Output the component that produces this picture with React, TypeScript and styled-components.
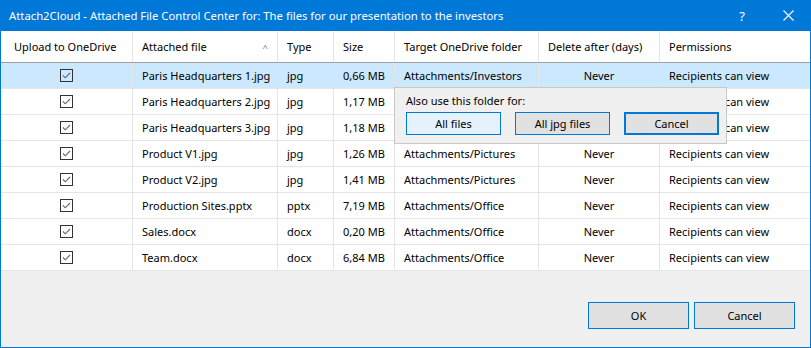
import styled, { createGlobalStyle } from 'styled-components';

const GlobalStyle = createGlobalStyle`
  html, body {
    margin: 0;
    padding: 0;
    background: #ffffff;
  }
  * {
    box-sizing: border-box;
  }
`;

interface FileRow {
  name: string;
  type: string;
  size: string;
  folder: string;
}

const files: FileRow[] = [
  { name: 'Paris Headquarters 1.jpg', type: 'jpg', size: '0,66 MB', folder: 'Attachments/Investors' },
  { name: 'Paris Headquarters 2.jpg', type: 'jpg', size: '1,17 MB', folder: 'Attachments/Investors' },
  { name: 'Paris Headquarters 3.jpg', type: 'jpg', size: '1,18 MB', folder: 'Attachments/Investors' },
  { name: 'Product V1.jpg', type: 'jpg', size: '1,26 MB', folder: 'Attachments/Pictures' },
  { name: 'Product V2.jpg', type: 'jpg', size: '1,41 MB', folder: 'Attachments/Pictures' },
  { name: 'Production Sites.pptx', type: 'pptx', size: '7,19 MB', folder: 'Attachments/Office' },
  { name: 'Sales.docx', type: 'docx', size: '0,20 MB', folder: 'Attachments/Office' },
  { name: 'Team.docx', type: 'docx', size: '6,84 MB', folder: 'Attachments/Office' },
];

const columns = '132px 145px 56px 61px 144px 121px 1fr';

function CheckIcon() {
  return (
    <svg width="13" height="13" viewBox="0 0 13 13">
      <rect x="0.5" y="0.5" width="12" height="12" fill="none" stroke="#333333" />
      <path d="M3 6.5 L5.3 8.8 L10 4" fill="none" stroke="#666666" strokeWidth="1.1" />
    </svg>
  );
}

export default function App() {
  return (
    <>
      <GlobalStyle />
      <Window>
        <TitleBar>
          <TitleText>
            Attach2Cloud - Attached File Control Center for: The files for our presentation to the investors
          </TitleText>
          <TitleButton>?</TitleButton>
          <TitleButton>
            <svg width="11" height="11" viewBox="0 0 11 11">
              <path d="M0.5 0.5 L10.5 10.5 M10.5 0.5 L0.5 10.5" stroke="#ffffff" strokeWidth="1.1" />
            </svg>
          </TitleButton>
        </TitleBar>
        <Body>
          <Table>
            <HeaderRow>
              <HeaderCell $first>Upload to OneDrive</HeaderCell>
              <HeaderCell>
                Attached file
                <SortArrow>^</SortArrow>
              </HeaderCell>
              <HeaderCell>Type</HeaderCell>
              <HeaderCell>Size</HeaderCell>
              <HeaderCell>Target OneDrive folder</HeaderCell>
              <HeaderCell>Delete after (days)</HeaderCell>
              <HeaderCell $last>Permissions</HeaderCell>
            </HeaderRow>
            {files.map((f, i) => (
              <Row key={f.name} $selected={i === 0}>
                <Cell $center>
                  <CheckIcon />
                </Cell>
                <Cell>{f.name}</Cell>
                <Cell>{f.type}</Cell>
                <Cell>{f.size}</Cell>
                <Cell>{f.folder}</Cell>
                <Cell $center>Never</Cell>
                <Cell $last>Recipients can view</Cell>
              </Row>
            ))}
            <Popup>
              <PopupLabel>Also use this folder for:</PopupLabel>
              <PopupButtons>
                <Button $variant="hover">All files</Button>
                <Button>All jpg files</Button>
                <Button $variant="focus">Cancel</Button>
              </PopupButtons>
            </Popup>
          </Table>
          <Footer>
            <Button $wide>OK</Button>
            <Button $wide>Cancel</Button>
          </Footer>
        </Body>
      </Window>
    </>
  );
}

const Window = styled.div`
  width: 811px;
  height: 348px;
  display: flex;
  flex-direction: column;
  border: 1px solid #0078d7;
  border-top: none;
  background: #f0f0f0;
  font-family: 'Noto Sans', 'Open Sans', sans-serif;
  font-size: 11px;
  color: #000000;
`;

const TitleBar = styled.div`
  height: 31px;
  margin: 0 -1px;
  background: #0078d7;
  color: #ffffff;
  display: flex;
  align-items: center;
  padding-left: 9px;
`;

const TitleText = styled.div`
  flex: 1;
  font-size: 11.3px;
  white-space: nowrap;
`;

const TitleButton = styled.div`
  width: 46px;
  height: 31px;
  display: flex;
  align-items: center;
  justify-content: center;
  font-size: 13px;
`;

const Body = styled.div`
  flex: 1;
  display: flex;
  flex-direction: column;
`;

const Table = styled.div`
  position: relative;
  background: #ffffff;
`;

const HeaderRow = styled.div`
  display: grid;
  grid-template-columns: ${columns};
  height: 32px;
  border-bottom: 1px solid #a0a0a0;
`;

const HeaderCell = styled.div<{ $first?: boolean; $last?: boolean }>`
  position: relative;
  display: flex;
  align-items: center;
  padding-left: ${(p) => (p.$first ? '13px' : '9px')};
  border-right: ${(p) => (p.$last ? 'none' : '1px solid #e5e5e5')};
  white-space: nowrap;
`;

const SortArrow = styled.span`
  position: absolute;
  right: 9px;
  top: 11px;
  font-size: 8px;
  color: #6d7c94;
  transform: scaleX(1.2);
`;

const Row = styled.div<{ $selected?: boolean }>`
  display: grid;
  grid-template-columns: ${columns};
  height: 26px;
  background: ${(p) => (p.$selected ? '#cce8ff' : '#ffffff')};
  border-bottom: 1px solid #e5e5e5;
`;

const Cell = styled.div<{ $center?: boolean; $last?: boolean }>`
  display: flex;
  align-items: center;
  justify-content: ${(p) => (p.$center ? 'center' : 'flex-start')};
  padding-left: ${(p) => (p.$center ? '0' : '9px')};
  border-right: ${(p) => (p.$last ? 'none' : '1px solid #e5e5e5')};
  white-space: nowrap;
`;

const Popup = styled.div`
  position: absolute;
  left: 393px;
  top: 56px;
  width: 333px;
  height: 57px;
  background: #f0f0f0;
  border: 1px solid #c8c8c8;
  padding: 5px 0 0 11px;
  display: flex;
  flex-direction: column;
  gap: 3px;
`;

const PopupLabel = styled.div`
  height: 16px;
  line-height: 16px;
`;

const PopupButtons = styled.div`
  display: flex;
  gap: 14px;
`;

const Button = styled.div<{ $variant?: 'hover' | 'focus'; $wide?: boolean }>`
  width: ${(p) => (p.$wide ? '101px' : '95px')};
  height: ${(p) => (p.$wide ? '27px' : '23px')};
  display: flex;
  align-items: center;
  justify-content: center;
  background: ${(p) => (p.$variant === 'hover' ? '#e5f1fb' : '#e1e1e1')};
  border: ${(p) => (p.$variant === 'focus' ? '2px' : '1px')} solid #0078d7;
`;

const Footer = styled.div`
  flex: 1;
  display: flex;
  justify-content: flex-end;
  align-items: flex-start;
  gap: 5px;
  padding: 31px 15px 0 0;
`;
